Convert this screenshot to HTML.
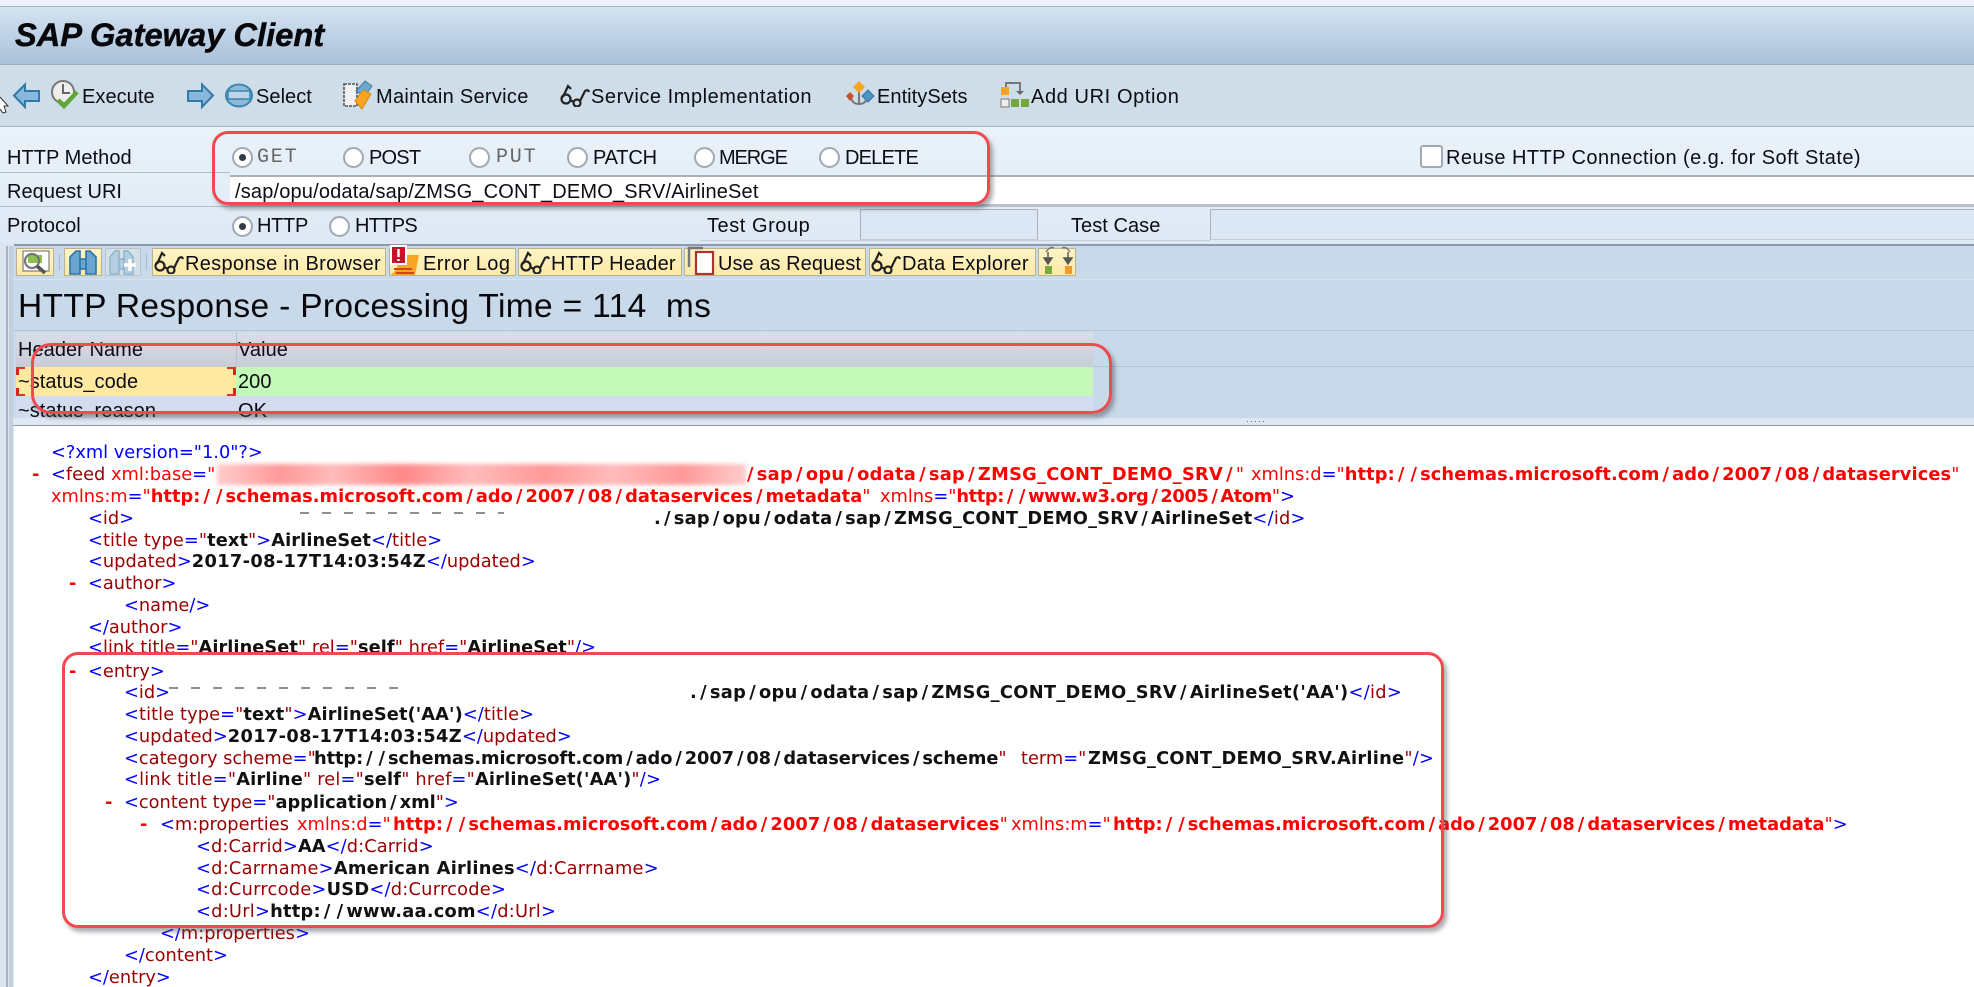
<!DOCTYPE html>
<html><head><meta charset="utf-8"><title>SAP Gateway Client</title>
<style>
html,body{margin:0;padding:0;background:#fff}
#p{position:relative;width:1974px;height:987px;overflow:hidden;background:#fff;font-family:"Liberation Sans",sans-serif;color:#111}
.a{position:absolute}
.t{position:absolute;font-size:20px;line-height:24px;white-space:nowrap;color:#0c0c14;letter-spacing:.05px}
.l{position:absolute;font-family:"DejaVu Sans",sans-serif;font-size:17.8px;line-height:22px;white-space:nowrap;color:#990000;transform:translateY(1px)}
.b{color:#0000ff}.k{font-weight:bold;color:#111}.R{font-weight:bold;color:#f00}.x{color:#f00}
.d{letter-spacing:.35px}
i{font-style:normal;padding:0 3px}
.m{position:absolute;width:6px;height:3px;background:#e23030}
.rad{position:absolute;width:21px;height:21px;border-radius:50%;box-sizing:border-box;border:2px solid #a3a9b2;background:radial-gradient(circle at 50% 50%,#fff 55%,#eef2f7)}
.rad.on::after{content:"";position:absolute;left:5px;top:5px;width:7px;height:7px;border-radius:50%;background:#333a48}
.btn{position:absolute;top:248px;height:28px;box-sizing:border-box;border:1px solid #b9b191;background:linear-gradient(#fff4c6,#fde9a5);border-radius:1px}
.red{position:absolute;box-sizing:border-box;border:3px solid #f04a4f;border-radius:16px;box-shadow:3px 4px 4px rgba(70,70,80,.45);pointer-events:none}
svg{position:absolute;overflow:visible}
.g{font-family:'Liberation Mono',monospace;font-size:20px;letter-spacing:1.8px;color:#666}
</style></head><body><div id="p">
<svg width="0" height="0" style="position:absolute"><defs>
<symbol id="gl" viewBox="0 0 31 24"><g fill="none" stroke="#222" stroke-width="2.2"><path d="M4 14 L9 3 L12 6"/><circle cx="7" cy="16" r="4.5"/><circle cx="18" cy="20" r="3.5"/><path d="M11 17 L15 19 M21 18 L26 8 Q29 6 30 9"/></g></symbol>
</defs></svg>

<!-- top -->
<div class="a" style="left:0;top:0;width:1974px;height:6px;background:#eef1fb"></div>
<div class="a" style="left:0;top:6px;width:1974px;height:1px;background:#a9b1bf"></div>
<div class="a" style="left:0;top:7px;width:1974px;height:57px;background:linear-gradient(#d4e3f2,#a9c1d9)"></div>
<div class="a" style="left:0;top:64px;width:1974px;height:1px;background:#9db0c4"></div>
<div class="a" style="left:0;top:65px;width:1974px;height:61px;background:#cfdde9"></div>
<div class="a" style="left:0;top:126px;width:1974px;height:1px;background:#a6b3c1"></div>
<div class="a" style="left:0;top:127px;width:1974px;height:117px;background:linear-gradient(#eaf2f9,#dde9f5)"></div>
<div class="t" style="left:15px;top:16px;font-size:32.6px;line-height:38px;font-weight:bold;font-style:italic;color:#08080c;-webkit-text-stroke:.5px #08080c">SAP Gateway Client</div>

<!-- toolbar icons -->
<svg style="left:13px;top:83px" width="27" height="25" viewBox="0 0 27 25"><path d="M1 12.5 L12 1.5 V8 H26 V18 H12 V24 Z" fill="#8ab8dc" stroke="#2e7aa8" stroke-width="2"/></svg>
<svg style="left:50px;top:80px" width="30" height="30" viewBox="0 0 30 30"><circle cx="13" cy="12" r="11" fill="#eee" stroke="#777" stroke-width="2"/><path d="M13 4 V13 H20" fill="none" stroke="#666" stroke-width="2"/><path d="M8 20 L14 26 L27 12" fill="none" stroke="#5fa73a" stroke-width="4.5"/></svg>
<svg style="left:187px;top:83px" width="27" height="25" viewBox="0 0 27 25"><path d="M26 12.5 L15 1.5 V8 H1 V18 H15 V24 Z" fill="#8ab8dc" stroke="#2e7aa8" stroke-width="2"/></svg>
<svg style="left:225px;top:83px" width="28" height="25" viewBox="0 0 28 25"><ellipse cx="14" cy="12.5" rx="13" ry="11" fill="#8fb7d6" stroke="#3a86b2" stroke-width="2"/><rect x="3" y="8" width="22" height="8" fill="#bcd5e8" stroke="#3a86b2" stroke-width="1.5"/></svg>
<svg style="left:343px;top:80px" width="30" height="30" viewBox="0 0 30 30"><rect x="1" y="4" width="13" height="22" fill="#f2f2f2" stroke="#555" stroke-width="1.6" stroke-dasharray="3 1"/><path d="M13 11 L22 1 L29 6 L22 16Z" fill="#6fa8cc" stroke="#3a7ca5"/><path d="M12 21 L20 10 L28 14 L19 29 Z" fill="#f6a623" stroke="#d98a10"/></svg>
<svg style="left:559px;top:83px" width="31" height="25"><use href="#gl" width="31" height="24"/></svg>
<svg style="left:845px;top:80px" width="30" height="30" viewBox="0 0 30 30"><path d="M14 12 V24 M6 17 Q7 24 14 24 Q21 24 22 17" fill="none" stroke="#777" stroke-width="2"/><path d="M14 1 L20 7 L14 13 L8 7Z" fill="#f5a524"/><path d="M5 12 L9 16 L5 21 L1 16Z" fill="#c9502a"/><path d="M23 10 L29 16 L23 22 L17 16Z" fill="#4d96c4" stroke="#2f77a4"/></svg>
<svg style="left:1000px;top:80px" width="30" height="28" viewBox="0 0 30 28"><path d="M6 7 V3 H20 V12" fill="none" stroke="#777" stroke-width="2"/><path d="M16 11 H24 L20 15Z" fill="#666"/><rect x="1" y="7" width="8" height="8" fill="#f5a524"/><rect x="1" y="19" width="8" height="8" fill="#eee" stroke="#777"/><rect x="11" y="19" width="8" height="8" fill="#72a83f"/><rect x="21" y="19" width="8" height="8" fill="#72a83f"/></svg>
<div class="t" style="left:82px;top:85px">Execute</div>
<div class="t" style="left:256px;top:85px">Select</div>
<div class="t" style="left:376px;top:85px;letter-spacing:.3px">Maintain Service</div>
<div class="t" style="left:591px;top:85px;letter-spacing:.55px">Service Implementation</div>
<div class="t" style="left:877px;top:85px">EntitySets</div>
<div class="t" style="left:1031px;top:85px;letter-spacing:.6px">Add URI Option</div>
<svg style="left:0;top:97px" width="10" height="20" viewBox="0 0 10 20"><path d="M0 0 L8 9 L4 9 L6 15 L3 16 L0 12" fill="#fff" stroke="#333" stroke-width="1"/></svg>

<!-- form -->
<div class="a" style="left:0;top:172px;width:230px;height:1px;background:#b2bdca"></div>
<div class="a" style="left:0;top:206px;width:230px;height:1px;background:#b2bdca"></div>
<div class="t" style="left:7px;top:146px">HTTP Method</div>
<div class="t" style="left:7px;top:180px">Request URI</div>
<div class="t" style="left:7px;top:214px">Protocol</div>
<div class="a" style="left:230px;top:175px;width:1744px;height:2px;background:#a8b0ba"></div>
<div class="a" style="left:230px;top:177px;width:1744px;height:27px;background:#fff"></div>
<div class="a" style="left:230px;top:204px;width:1744px;height:3px;background:#b8c0ca"></div>
<div class="t" style="left:235px;top:180px;letter-spacing:.17px">/sap/opu/odata/sap/ZMSG_CONT_DEMO_SRV/AirlineSet</div>

<div class="rad on" style="left:232px;top:147px"></div>
<div class="t g" style="left:257px;top:146px">GET</div>
<div class="rad" style="left:343px;top:147px"></div>
<div class="t" style="left:369px;top:146px;letter-spacing:-.8px">POST</div>
<div class="rad" style="left:469px;top:147px"></div>
<div class="t g" style="left:496px;top:146px">PUT</div>
<div class="rad" style="left:567px;top:147px"></div>
<div class="t" style="left:593px;top:146px;letter-spacing:-.2px">PATCH</div>
<div class="rad" style="left:694px;top:147px"></div>
<div class="t" style="left:719px;top:146px;letter-spacing:-1.1px">MERGE</div>
<div class="rad" style="left:819px;top:147px"></div>
<div class="t" style="left:845px;top:146px;letter-spacing:-.8px">DELETE</div>
<div class="a" style="left:1420px;top:145px;width:23px;height:23px;box-sizing:border-box;border:2px solid #a3a9b2;border-radius:3px;background:#fff"></div>
<div class="t" style="left:1446px;top:146px;letter-spacing:.43px">Reuse HTTP Connection (e.g. for Soft State)</div>

<div class="rad on" style="left:232px;top:216px"></div>
<div class="t" style="left:257px;top:214px;letter-spacing:-.3px">HTTP</div>
<div class="rad" style="left:329px;top:216px"></div>
<div class="t" style="left:355px;top:214px;letter-spacing:-.7px">HTTPS</div>
<div class="t" style="left:707px;top:214px;letter-spacing:.55px">Test Group</div>
<div class="t" style="left:1071px;top:214px">Test Case</div>
<div class="a" style="left:860px;top:209px;width:178px;height:31px;box-sizing:border-box;border:1px solid #a6b0bc;border-bottom-color:#c2ccd8;background:#dbe7f4"></div>
<div class="a" style="left:1210px;top:209px;width:764px;height:31px;box-sizing:border-box;border:1px solid #a6b0bc;border-bottom-color:#c2ccd8;border-right:0;background:#dbe7f4"></div>
<div class="a" style="left:700px;top:240px;width:510px;height:1px;background:#c4cfdb"></div>

<!-- response panel -->
<div class="a" style="left:0;top:244px;width:1974px;height:2px;background:#8e9aa9"></div>
<div class="a" style="left:0;top:243px;width:14px;height:744px;background:#dbe5f0"></div>
<div class="a" style="left:6px;top:246px;width:2px;height:741px;background:#a4b3c4"></div>
<div class="a" style="left:9px;top:246px;width:4px;height:741px;background:#c3cfdc"></div>
<div class="a" style="left:13px;top:246px;width:1961px;height:172px;background:#c8d9e9"></div>
<div class="a" style="left:13px;top:279px;width:1961px;height:1px;background:#d8e3ee"></div>
<div class="a" style="left:13px;top:330px;width:1961px;height:1px;background:#b5c7d9"></div>
<div class="a" style="left:1093px;top:366px;width:881px;height:1px;background:#b0c2d5"></div>

<!-- buttons -->
<div class="btn" style="left:16px;width:38px"></div>
<svg style="left:20px;top:250px" width="32" height="25" viewBox="0 0 32 25"><rect x="3" y="1" width="26" height="20" fill="#fff" stroke="#666"/><rect x="8" y="5" width="14" height="8" fill="#8cc04f"/><circle cx="12" cy="11" r="7" fill="none" stroke="#777" stroke-width="2.2"/><path d="M17 16 L25 23" stroke="#555" stroke-width="3.5"/></svg>
<div class="btn" style="left:64px;width:38px"></div>
<svg style="left:68px;top:249px" width="30" height="26" viewBox="0 0 30 26"><path d="M2 25 V8 L8 2 H12 V25Z M18 25 V2 H22 L28 8 V25Z M12 10 H18 V20 H12Z" fill="#6aa6cf" stroke="#2a74a5" stroke-width="1.6"/></svg>
<div class="btn" style="left:105px;width:36px;background:#d5e0e6;border-color:#b7c4cf"></div>
<svg style="left:108px;top:249px" width="30" height="26" viewBox="0 0 30 26"><path d="M2 25 V8 L7 2 H11 V25Z M16 25 V2 H20 L25 8 V25Z M11 10 H16 V20 H11Z" fill="#b5cfe2" stroke="#8db2cd" stroke-width="1.4"/><path d="M22 10 V22 M16 16 H28" stroke="#fff" stroke-width="3.5"/></svg>
<div class="a" style="left:59px;top:254px;width:1px;height:16px;background:#a9b9c9"></div>
<div class="a" style="left:146px;top:254px;width:1px;height:16px;background:#a9b9c9"></div>
<div class="btn" style="left:152px;width:234px"></div>
<svg style="left:153px;top:250px" width="31" height="24"><use href="#gl" width="31" height="24"/></svg>
<div class="t" style="left:185px;top:252px;letter-spacing:.31px">Response in Browser</div>
<div class="btn" style="left:389px;width:127px"></div>
<svg style="left:390px;top:245px" width="32" height="31" viewBox="0 0 32 31"><path d="M8 10 H29 L25 30 H1 L7 24Z" fill="#f6a623"/><path d="M4 24 H22 M6 28 H24" stroke="#d2451e" stroke-width="2"/><rect x="0" y="0" width="17" height="20" fill="#fff"/><rect x="2" y="2" width="13" height="16" fill="#c4132a"/><path d="M8.5 4 V12 M8.5 14 V16" stroke="#fff" stroke-width="2.4"/></svg>
<div class="t" style="left:423px;top:252px;letter-spacing:.45px">Error Log</div>
<div class="btn" style="left:518px;width:164px"></div>
<svg style="left:519px;top:250px" width="31" height="24"><use href="#gl" width="31" height="24"/></svg>
<div class="t" style="left:551px;top:252px;letter-spacing:.15px">HTTP Header</div>
<div class="btn" style="left:684px;width:182px"></div>
<svg style="left:687px;top:246px" width="30" height="30" viewBox="0 0 30 30"><path d="M2 21 V2 H16" fill="none" stroke="#777" stroke-width="2.5"/><rect x="9" y="6" width="17" height="22" fill="#fff" stroke="#a8362c" stroke-width="2.2"/></svg>
<div class="t" style="left:718px;top:252px">Use as Request</div>
<div class="btn" style="left:869px;width:167px"></div>
<svg style="left:870px;top:250px" width="31" height="24"><use href="#gl" width="31" height="24"/></svg>
<div class="t" style="left:902px;top:252px;letter-spacing:.35px">Data Explorer</div>
<div class="btn" style="left:1038px;width:38px"></div>
<svg style="left:1040px;top:246px" width="36" height="30" viewBox="0 0 36 30"><path d="M6 6 Q10 0 14 2 M30 6 Q26 0 22 2" fill="none" stroke="#777" stroke-width="1.4"/><path d="M8 6 V16 M28 6 V16 M4 12 L8 18 L12 12Z M24 12 L28 18 L32 12Z" fill="#555" stroke="#555" stroke-width="1.4"/><rect x="5" y="20" width="7" height="8" fill="#7aa93f"/><rect x="25" y="20" width="7" height="8" fill="#ee9a2a"/></svg>

<div class="t" style="left:18px;top:287px;font-size:33.5px;line-height:40px;letter-spacing:.34px;color:#08080c">HTTP Response - Processing Time = 114 &nbsp;ms</div>

<!-- table -->
<div class="a" style="left:16px;top:332px;width:1077px;height:35px;background:linear-gradient(#d8dfe8,#c8ccd6)"></div>
<div class="a" style="left:236px;top:332px;width:1px;height:35px;background:#b8c0cc"></div>
<div class="t" style="left:18px;top:338px">Header Name</div>
<div class="t" style="left:238px;top:338px">Value</div>
<div class="a" style="left:16px;top:367px;width:220px;height:29px;background:#ffe9a1"></div>
<div class="a" style="left:236px;top:367px;width:857px;height:29px;background:#c4f8b8"></div>
<div class="a" style="left:16px;top:396px;width:1077px;height:22px;background:#d2dcee;overflow:hidden"></div>
<div class="a" style="left:16px;top:367px;width:3px;height:29px;background:#e02020;clip-path:polygon(0 0,100% 0,100% 8px,0 8px,0 21px,100% 21px,100% 100%,0 100%)"></div>
<div class="a" style="left:233px;top:367px;width:3px;height:29px;background:#e02020;clip-path:polygon(0 0,100% 0,100% 8px,0 8px,0 21px,100% 21px,100% 100%,0 100%)"></div>
<div class="m" style="left:16px;top:367px;height:2px;width:9px"></div><div class="m" style="left:227px;top:367px;height:2px;width:9px"></div>
<div class="m" style="left:16px;top:394px;height:2px;width:9px"></div><div class="m" style="left:227px;top:394px;height:2px;width:9px"></div>
<div class="t" style="left:18px;top:370px">~status_code</div>
<div class="t" style="left:238px;top:370px">200</div>
<div class="a" style="left:13px;top:396px;width:1080px;height:22px;overflow:hidden"><div class="t" style="left:5px;top:3px">~status_reason</div><div class="t" style="left:225px;top:3px">OK</div></div>
<div class="a" style="left:13px;top:418px;width:1961px;height:7px;background:#dfe8f2"></div>
<div class="a" style="left:1247px;top:421px;width:18px;height:1px;background:repeating-linear-gradient(90deg,#667 0 1px,transparent 1px 4px)"></div>
<div class="a" style="left:13px;top:425px;width:1961px;height:1px;background:#8f9cab"></div>

<!-- xml -->
<div class="l b" style="left:51px;top:441px">&lt;?xml version="1.0"?&gt;</div>
<div class="l x" style="left:32px;top:463px;font-weight:bold">-</div>
<div class="l" style="left:51px;top:463px"><span class="b">&lt;</span>feed <span class="x">xml:base</span><span class="b">=</span><span class="x">"</span></div>
<div class="a" style="left:217px;top:464px;width:529px;height:21px;background:linear-gradient(90deg,#fcc,#f99 12%,#fbb 22%,#f88 35%,#fbb 48%,#f99 62%,#fbb 75%,#f99 88%,#fcc);filter:blur(2px)"></div>
<div class="l R" style="left:744px;top:463px;letter-spacing:.3px"><i>/</i>sap<i>/</i>opu<i>/</i>odata<i>/</i>sap<i>/</i>ZMSG_CONT_DEMO_SRV<i>/</i><span style="font-weight:normal">"</span></div>
<div class="l x" style="left:1251px;top:463px">xmlns:d<span class="b">=</span>"<span class="R" style="letter-spacing:.12px">http:<i>/</i><i>/</i>schemas.microsoft.com<i>/</i>ado<i>/</i>2007<i>/</i>08<i>/</i>dataservices</span>"</div>
<div class="l x" style="left:51px;top:485px">xmlns:m<span class="b">=</span>"<span class="R" style="letter-spacing:.04px">http:<i>/</i><i>/</i>schemas.microsoft.com<i>/</i>ado<i>/</i>2007<i>/</i>08<i>/</i>dataservices<i>/</i>metadata</span>"</div>
<div class="l x" style="left:880px;top:485px">xmlns<span class="b">=</span>"<span class="R" style="letter-spacing:-.4px">http:<i>/</i><i>/</i>www.w3.org<i>/</i>2005<i>/</i>Atom</span>"<span class="b">&gt;</span></div>

<div class="l" style="left:88px;top:507px"><span class="b">&lt;</span>id<span class="b">&gt;</span></div>
<div class="a" style="left:300px;top:512px;width:204px;height:2px;background:repeating-linear-gradient(90deg,#444 0 9px,transparent 9px 22px);opacity:.6"></div>
<div class="l k" style="left:654px;top:507px;letter-spacing:.25px">.<i>/</i>sap<i>/</i>opu<i>/</i>odata<i>/</i>sap<i>/</i>ZMSG_CONT_DEMO_SRV<i>/</i>AirlineSet<span class="b" style="font-weight:normal">&lt;/</span><span style="font-weight:normal;color:#900">id</span><span class="b" style="font-weight:normal">&gt;</span></div>
<div class="l" style="left:88px;top:529px;letter-spacing:.08px"><span class="b">&lt;</span>title type<span class="b">=</span>"<span class="k">text</span>"<span class="b">&gt;</span><span class="k">AirlineSet</span><span class="b">&lt;/</span>title<span class="b">&gt;</span></div>
<div class="l" style="left:88px;top:550px"><span class="b">&lt;</span>updated<span class="b">&gt;</span><span class="k d">2017-08-17T14:03:54Z</span><span class="b">&lt;/</span>updated<span class="b">&gt;</span></div>
<div class="l x" style="left:69px;top:572px;font-weight:bold">-</div>
<div class="l" style="left:88px;top:572px"><span class="b">&lt;</span>author<span class="b">&gt;</span></div>
<div class="l" style="left:124px;top:594px"><span class="b">&lt;</span>name<span class="b">/&gt;</span></div>
<div class="l" style="left:88px;top:616px"><span class="b">&lt;/</span>author<span class="b">&gt;</span></div>
<div class="l" style="left:88px;top:636px;letter-spacing:.05px"><span class="b">&lt;</span>link title<span class="b">=</span>"<span class="k">AirlineSet</span>" rel<span class="b">=</span>"<span class="k">self</span>" href<span class="b">=</span>"<span class="k">AirlineSet</span>"<span class="b">/&gt;</span></div>
<div class="l x" style="left:69px;top:660px;font-weight:bold">-</div>
<div class="l" style="left:88px;top:660px"><span class="b">&lt;</span>entry<span class="b">&gt;</span></div>
<div class="l" style="left:124px;top:681px"><span class="b">&lt;</span>id<span class="b">&gt;</span></div>
<div class="a" style="left:169px;top:687px;width:240px;height:2px;background:repeating-linear-gradient(90deg,#444 0 9px,transparent 9px 22px);opacity:.6"></div>
<div class="l k" style="left:690px;top:681px;letter-spacing:.32px">.<i>/</i>sap<i>/</i>opu<i>/</i>odata<i>/</i>sap<i>/</i>ZMSG_CONT_DEMO_SRV<i>/</i>AirlineSet('AA')<span class="b" style="font-weight:normal">&lt;/</span><span style="font-weight:normal;color:#900">id</span><span class="b" style="font-weight:normal">&gt;</span></div>
<div class="l" style="left:124px;top:703px;letter-spacing:.1px"><span class="b">&lt;</span>title type<span class="b">=</span>"<span class="k">text</span>"<span class="b">&gt;</span><span class="k">AirlineSet('AA')</span><span class="b">&lt;/</span>title<span class="b">&gt;</span></div>
<div class="l" style="left:124px;top:725px"><span class="b">&lt;</span>updated<span class="b">&gt;</span><span class="k d">2017-08-17T14:03:54Z</span><span class="b">&lt;/</span>updated<span class="b">&gt;</span></div>
<div class="l" style="left:124px;top:747px"><span class="b">&lt;</span>category scheme<span class="b">=</span>"</div>
<div class="l k" style="left:314px;top:747px;letter-spacing:-.08px">http:<i>/</i><i>/</i>schemas.microsoft.com<i>/</i>ado<i>/</i>2007<i>/</i>08<i>/</i>dataservices<i>/</i>scheme<span style="font-weight:normal;color:#900">"</span></div>
<div class="l" style="left:1021px;top:747px">term<span class="b">=</span>"</div>
<div class="l k" style="left:1088px;top:747px;letter-spacing:.25px">ZMSG_CONT_DEMO_SRV.Airline<span style="font-weight:normal;color:#900">"</span><span class="b" style="font-weight:normal">/&gt;</span></div>
<div class="l" style="left:124px;top:768px;letter-spacing:.18px"><span class="b">&lt;</span>link title<span class="b">=</span>"<span class="k">Airline</span>" rel<span class="b">=</span>"<span class="k">self</span>" href<span class="b">=</span>"<span class="k">AirlineSet('AA')</span>"<span class="b">/&gt;</span></div>
<div class="l x" style="left:105px;top:791px;font-weight:bold">-</div>
<div class="l" style="left:124px;top:791px"><span class="b">&lt;</span>content type<span class="b">=</span>"<span class="k">application<i>/</i>xml</span>"<span class="b">&gt;</span></div>
<div class="l x" style="left:140px;top:813px;font-weight:bold">-</div>
<div class="l" style="left:160px;top:813px"><span class="b">&lt;</span>m:properties</div>
<div class="l x" style="left:297px;top:813px">xmlns:d<span class="b">=</span>"</div>
<div class="l x" style="left:393px;top:813px"><span class="R" style="letter-spacing:.12px">http:<i>/</i><i>/</i>schemas.microsoft.com<i>/</i>ado<i>/</i>2007<i>/</i>08<i>/</i>dataservices</span>"</div>
<div class="l x" style="left:1011px;top:813px">xmlns:m<span class="b">=</span>"</div>
<div class="l x" style="left:1113px;top:813px"><span class="R" style="letter-spacing:.04px">http:<i>/</i><i>/</i>schemas.microsoft.com<i>/</i>ado<i>/</i>2007<i>/</i>08<i>/</i>dataservices<i>/</i>metadata</span>"<span class="b">&gt;</span></div>
<div class="l" style="left:196px;top:835px;letter-spacing:.1px"><span class="b">&lt;</span>d:Carrid<span class="b">&gt;</span><span class="k">AA</span><span class="b">&lt;/</span>d:Carrid<span class="b">&gt;</span></div>
<div class="l" style="left:196px;top:857px;letter-spacing:.25px"><span class="b">&lt;</span>d:Carrname<span class="b">&gt;</span><span class="k">American Airlines</span><span class="b">&lt;/</span>d:Carrname<span class="b">&gt;</span></div>
<div class="l" style="left:196px;top:878px;letter-spacing:.25px"><span class="b">&lt;</span>d:Currcode<span class="b">&gt;</span><span class="k">USD</span><span class="b">&lt;/</span>d:Currcode<span class="b">&gt;</span></div>
<div class="l" style="left:196px;top:900px;letter-spacing:.25px"><span class="b">&lt;</span>d:Url<span class="b">&gt;</span><span class="k">http:<i>/</i><i>/</i>www.aa.com</span><span class="b">&lt;/</span>d:Url<span class="b">&gt;</span></div>
<div class="l" style="left:160px;top:922px"><span class="b">&lt;/</span>m:properties<span class="b">&gt;</span></div>
<div class="l" style="left:124px;top:944px"><span class="b">&lt;/</span>content<span class="b">&gt;</span></div>
<div class="l" style="left:88px;top:966px"><span class="b">&lt;/</span>entry<span class="b">&gt;</span></div>

<!-- red highlights -->
<div class="red" style="left:212px;top:131px;width:778px;height:74px"></div>
<div class="red" style="left:31px;top:343px;width:1081px;height:71px;border-radius:20px"></div>
<div class="red" style="left:62px;top:652px;width:1382px;height:276px"></div>
</div></body></html>
